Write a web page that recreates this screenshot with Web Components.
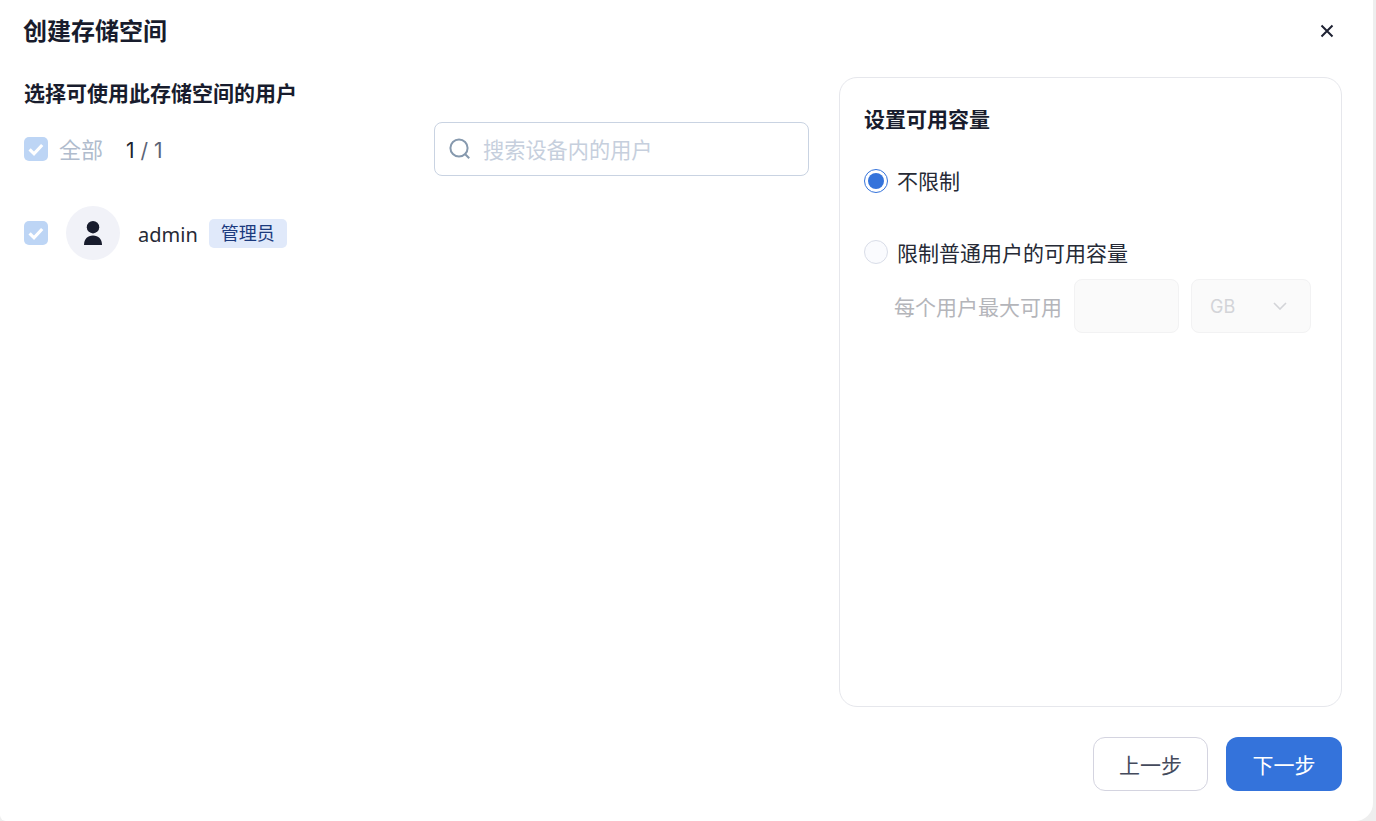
<!DOCTYPE html>
<html lang="zh">
<head>
<meta charset="utf-8">
<title>创建存储空间</title>
<style>
  html, body { margin: 0; height: 100%; background: #eeeeee; overflow: hidden; }
  body { font-family: Inter, "Noto Sans CJK SC", sans-serif; }
</style>
</head>
<body>
<storage-dialog heading="创建存储空间">
  <user-picker slot="left" heading="选择可使用此存储空间的用户" placeholder="搜索设备内的用户">
    <user-row name="admin" role="管理员"></user-row>
  </user-picker>
  <quota-panel slot="right" heading="设置可用容量"></quota-panel>
  <dialog-button slot="footer">上一步</dialog-button>
  <dialog-button slot="footer" primary>下一步</dialog-button>
</storage-dialog>

<script>
const CHECK = `<svg width="24" height="24" viewBox="0 0 24 24"><rect width="24" height="24" rx="5" fill="#bdd5f5"/><path d="M5.6 12.4l4.4 4.4 8.2-8.8" fill="none" stroke="#fff" stroke-width="3.2"/></svg>`

class StorageDialog extends HTMLElement {
  constructor() {
    super()
    this.attachShadow({ mode: "open" })
    this.shadowRoot.innerHTML = `
      <style>
        :host {
          display: flex;
          flex-direction: column;
          box-sizing: border-box;
          width: 1373px;
          height: 821px;
          padding: 0 31px 30px 24px;
          background: #fff;
          border-radius: 0 0 18px 6px;
        }
        header {
          display: flex;
          justify-content: space-between;
          align-items: center;
          height: 77px;
          padding-bottom: 14px;
          box-sizing: border-box;
        }
        h1 { margin: 0; margin-left: -1px; font-size: 24px; line-height: 30px; font-weight: 700; color: #181c2d; }
        .close { display: flex; margin-right: 8px; margin-bottom: 2px; }
        main {
          flex: 1;
          display: grid;
          grid-template-columns: 785px 503px;
          gap: 30px;
          min-height: 0;
        }
        footer {
          display: flex;
          justify-content: flex-end;
          gap: 18px;
          padding-top: 30px;
        }
      </style>
      <header>
        <h1>${this.getAttribute("heading")}</h1>
        <span class="close">
          <svg width="14" height="14" viewBox="0 0 14 14"><path d="M1.5 1.5l11 11M12.5 1.5l-11 11" fill="none" stroke="#1e2233" stroke-width="2"/></svg>
        </span>
      </header>
      <main>
        <slot name="left"></slot>
        <slot name="right"></slot>
      </main>
      <footer><slot name="footer"></slot></footer>
    `
  }
}

class UserPicker extends HTMLElement {
  constructor() {
    super()
    this.attachShadow({ mode: "open" })
    this.shadowRoot.innerHTML = `
      <style>
        :host { display: block; }
        h2 { margin: 0; padding-top: 3px; font-size: 21px; line-height: 28px; font-weight: 700; color: #181c2d; }
        .tools {
          display: flex;
          justify-content: space-between;
          align-items: center;
          margin-top: 14px;
          height: 54px;
        }
        .all { display: flex; align-items: center; font-size: 22px; }
        .all svg { display: block; }
        .all b { font-weight: 400; color: #b0bccd; margin: 0 0 2px 11px; }
        .count { margin-left: 23px; color: #5b6477; font-size: 21px; position: relative; top: 1px; }
        .count i { font-style: normal; color: #20242f; }
        .search {
          display: flex;
          align-items: center;
          gap: 12px;
          box-sizing: border-box;
          width: 375px;
          height: 54px;
          padding: 0 14px;
          border: 1px solid #c9d3e2;
          border-radius: 8px;
          font-size: 21.2px;
          color: #c6cfdd;
        }
        .search svg { flex: none; }
        .search span { margin-bottom: 2px; }
        .list { margin-top: 30px; }
      </style>
      <h2>${this.getAttribute("heading")}</h2>
      <div class="tools">
        <div class="all">${CHECK}<b>全部</b><span class="count"><i>1</i> / 1</span></div>
        <div class="search">
          <svg width="22" height="22" viewBox="0 0 22 22"><circle cx="10" cy="10" r="8.6" fill="none" stroke="#8699ae" stroke-width="2"/><path d="M16.2 16.2l4 4" stroke="#8699ae" stroke-width="2"/></svg>
          <span>${this.getAttribute("placeholder")}</span>
        </div>
      </div>
      <div class="list"><slot></slot></div>
    `
  }
}

class UserRow extends HTMLElement {
  constructor() {
    super()
    this.attachShadow({ mode: "open" })
    this.shadowRoot.innerHTML = `
      <style>
        :host { display: flex; align-items: center; height: 54px; }
        svg { display: block; flex: none; }
        .avatar {
          display: flex;
          align-items: center;
          justify-content: center;
          width: 54px;
          height: 54px;
          margin-left: 18px;
          border-radius: 50%;
          background: #f1f2f8;
        }
        .name { margin-left: 18px; font-size: 20px; color: #262a36; font-family: "Noto Sans", "Noto Sans CJK SC", sans-serif; position: relative; top: 1px; }
        .tag {
          margin-left: 11px;
          padding: 0 12px;
          height: 29px;
          line-height: 29px;
          border-radius: 5px;
          background: #e0e9fa;
          color: #1b3a7e;
          font-size: 18px;
        }
      </style>
      ${CHECK}
      <span class="avatar">
        <svg width="18" height="24" viewBox="0 0 18 24"><circle cx="9" cy="6.2" r="6.2" fill="#181c2d"/><path d="M0 24c0-6 3.5-9.6 9-9.6s9 3.6 9 9.6z" fill="#181c2d"/></svg>
      </span>
      <span class="name">${this.getAttribute("name")}</span>
      <span class="tag">${this.getAttribute("role")}</span>
    `
  }
}

class QuotaPanel extends HTMLElement {
  constructor() {
    super()
    this.attachShadow({ mode: "open" })
    this.shadowRoot.innerHTML = `
      <style>
        :host {
          display: block;
          box-sizing: border-box;
          height: 630px;
          padding: 28px 24px;
          border: 1px solid #e6e7ec;
          border-radius: 18px;
        }
        h2 { margin: 0; font-size: 21px; line-height: 28px; font-weight: 700; color: #181c2d; }
        .opt { display: flex; align-items: center; gap: 9px; font-size: 21px; line-height: 28px; color: #262a36; }
        .opt.first { margin-top: 34px; }
        .opt.second { margin-top: 44px; }
        .radio { box-sizing: border-box; width: 24px; height: 24px; border-radius: 50%; flex: none; }
        .radio.on { border: 1px solid #3473db; padding: 3px; background: #fff; margin-bottom: 3px; }
        .radio.on::before { content: ""; display: block; width: 16px; height: 16px; border-radius: 50%; background: #3473db; }
        .radio.off { border: 1px solid #d9dde8; background: #fafbfe; margin-bottom: 4px; }
        .limit {
          display: flex;
          align-items: center;
          gap: 12px;
          margin-top: 11px;
          padding-left: 30px;
          font-size: 21px;
          color: #b4b5ba;
        }
        .field {
          box-sizing: border-box;
          height: 54px;
          background: #fafafa;
          border: 1px solid #f2f2f3;
          border-radius: 8px;
        }
        .num { width: 105px; }
        .unit {
          display: flex;
          align-items: center;
          justify-content: space-between;
          width: 120px;
          padding: 0 23px 0 18px;
          font-size: 18px;
          color: #d3d4d8;
        }
      </style>
      <h2>${this.getAttribute("heading")}</h2>
      <div class="opt first"><span class="radio on"></span>不限制</div>
      <div class="opt second"><span class="radio off"></span>限制普通用户的可用容量</div>
      <div class="limit">
        <span>每个用户最大可用</span>
        <div class="field num"></div>
        <div class="field unit">
          <span>GB</span>
          <svg width="14" height="8" viewBox="0 0 14 8"><path d="M1 1l6 6 6-6" fill="none" stroke="#d3d4d8" stroke-width="1.6"/></svg>
        </div>
      </div>
    `
  }
}

class DialogButton extends HTMLElement {
  constructor() {
    super()
    this.attachShadow({ mode: "open" })
    this.shadowRoot.innerHTML = `
      <style>
        :host {
          display: flex;
          align-items: center;
          justify-content: center;
          box-sizing: border-box;
          width: 115px;
          height: 54px;
          border: 1px solid #d4d4e0;
          border-radius: 12px;
          background: #fff;
          color: #444a5c;
          font-size: 21px;
        }
        :host([primary]) {
          width: 116px;
          border: none;
          background: #3473db;
          color: #fff;
        }
      </style>
      <slot></slot>
    `
  }
}

customElements.define("storage-dialog", StorageDialog)
customElements.define("user-picker", UserPicker)
customElements.define("user-row", UserRow)
customElements.define("quota-panel", QuotaPanel)
customElements.define("dialog-button", DialogButton)
</script>
</body>
</html>
